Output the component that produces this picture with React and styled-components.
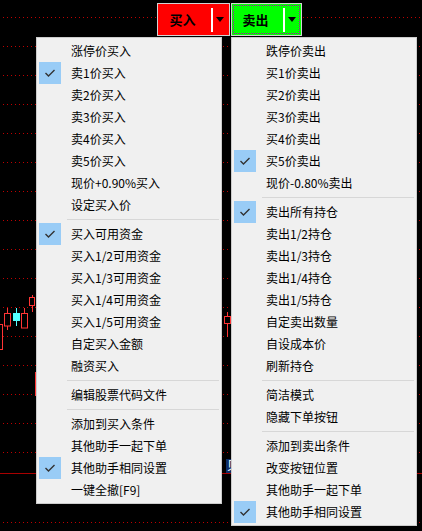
import React from 'react';
import styled, { createGlobalStyle } from 'styled-components';

const GlobalStyle = createGlobalStyle`
  html, body {
    margin: 0;
    padding: 0;
    background: #000;
  }
  * {
    box-sizing: border-box;
  }
`;

const SEP = 'sep';

const buyItems = [
  { text: '涨停价买入' },
  { text: '卖1价买入', checked: true },
  { text: '卖2价买入' },
  { text: '卖3价买入' },
  { text: '卖4价买入' },
  { text: '卖5价买入' },
  { text: '现价+0.90%买入' },
  { text: '设定买入价' },
  SEP,
  { text: '买入可用资金', checked: true },
  { text: '买入1/2可用资金' },
  { text: '买入1/3可用资金' },
  { text: '买入1/4可用资金' },
  { text: '买入1/5可用资金' },
  { text: '自定买入金额' },
  { text: '融资买入' },
  SEP,
  { text: '编辑股票代码文件' },
  SEP,
  { text: '添加到买入条件' },
  { text: '其他助手一起下单' },
  { text: '其他助手相同设置', checked: true },
  { text: '一键全撤[F9]' },
];

const sellItems = [
  { text: '跌停价卖出' },
  { text: '买1价卖出' },
  { text: '买2价卖出' },
  { text: '买3价卖出' },
  { text: '买4价卖出' },
  { text: '买5价卖出', checked: true },
  { text: '现价-0.80%卖出' },
  SEP,
  { text: '卖出所有持仓', checked: true },
  { text: '卖出1/2持仓' },
  { text: '卖出1/3持仓' },
  { text: '卖出1/4持仓' },
  { text: '卖出1/5持仓' },
  { text: '自定卖出数量' },
  { text: '自设成本价' },
  { text: '刷新持仓' },
  SEP,
  { text: '简洁模式' },
  { text: '隐藏下单按钮' },
  SEP,
  { text: '添加到卖出条件' },
  { text: '改变按钮位置' },
  { text: '其他助手一起下单' },
  { text: '其他助手相同设置', checked: true },
];

const gridRows = [17, 46, 75, 104, 133, 162, 191, 220, 249, 278, 307, 336, 365, 394, 423, 452, 522];

const Chart = () => (
  <ChartSvg width="422" height="531" viewBox="0 0 422 531">
    {gridRows.map((y) => (
      <line
        key={y}
        x1="3"
        x2="422"
        y1={y + 0.5}
        y2={y + 0.5}
        stroke="#c00000"
        strokeWidth="1"
        strokeDasharray="1 3"
      />
    ))}
    <line x1="0" x2="422" y1="473.5" y2="473.5" stroke="#a80000" strokeWidth="1" />

    {/* candles */}
    <g stroke="#ff3535" strokeWidth="1" fill="none">
      <rect x="-4.5" y="324.5" width="7" height="25" />
      <line x1="7.5" x2="7.5" y1="308" y2="313.5" />
      <line x1="7.5" x2="7.5" y1="326" y2="330" />
      <rect x="4.5" y="313.5" width="6" height="12.5" />
      <line x1="24.5" x2="24.5" y1="308" y2="313.5" />
      <rect x="21.5" y="313.5" width="6" height="14.5" />
      <line x1="32.5" x2="32.5" y1="295" y2="312" />
      <rect x="29.5" y="297.5" width="5" height="8" fill="#000" />
      <line x1="35.5" x2="35.5" y1="372" y2="396" />
      <line x1="227.5" x2="227.5" y1="312" y2="337" />
      <rect x="224.5" y="316.5" width="6" height="7" fill="#000" />
    </g>
    <line x1="16.5" x2="16.5" y1="308" y2="326" stroke="#54ffff" strokeWidth="1" />
    <rect x="13" y="313" width="7" height="8" fill="#54ffff" />

    <rect x="226" y="459" width="14" height="14" fill="#0c2d66" />
    <text x="227" y="470" fill="#fff" fontSize="12" fontFamily="'Noto Sans CJK SC', sans-serif">
      贝
    </text>
  </ChartSvg>
);

const Check = () => (
  <svg width="22" height="22" viewBox="0 0 22 22">
    <path d="M6.5 11 L9.5 14 L15.5 8" stroke="#333" strokeWidth="1.4" fill="none" />
  </svg>
);

const Menu = ({ items }) => (
  <MenuBox>
    {items.map((item, i) =>
      item === SEP ? (
        <Separator key={i} />
      ) : (
        <MenuItem key={i}>
          <CheckCell checked={item.checked}>{item.checked && <Check />}</CheckCell>
          <ItemText>{item.text}</ItemText>
        </MenuItem>
      )
    )}
  </MenuBox>
);

const OrderButton = ({ label, color, width, focused }) => (
  <ButtonBox color={color} width={width} focused={focused}>
    <ButtonLabel>{label}</ButtonLabel>
    <ButtonDivider />
    <ArrowCell>
      <Arrow />
    </ArrowCell>
  </ButtonBox>
);

const App = () => (
  <Screen>
    <GlobalStyle />
    <Chart />
    <Overlay>
      <ButtonRow>
        <OrderButton label="买入" color="#ff0000" width={73} />
        <OrderButton label="卖出" color="#00ff00" width={71} focused />
      </ButtonRow>
      <MenuRow>
        <Menu items={buyItems} />
        <Menu items={sellItems} />
      </MenuRow>
    </Overlay>
  </Screen>
);

const Screen = styled.div`
  position: relative;
  width: 422px;
  height: 531px;
  overflow: hidden;
  background: #000;
  font-family: 'Noto Sans CJK SC', 'Microsoft YaHei', sans-serif;
`;

const ChartSvg = styled.svg`
  position: absolute;
  top: 0;
  left: 0;
  display: block;
`;

const Overlay = styled.div`
  position: relative;
  display: flex;
  flex-direction: column;
  padding-top: 3px;
`;

const ButtonRow = styled.div`
  display: flex;
  gap: 1px;
  margin-left: 157px;
  height: 33px;
`;

const ButtonBox = styled.div`
  display: flex;
  align-items: center;
  width: ${(p) => p.width}px;
  height: 33px;
  background: ${(p) => p.color};
  border: 1px solid #d2d2d2;
  outline: ${(p) => (p.focused ? '1px dotted #b400b4' : 'none')};
  outline-offset: -3px;
`;

const ButtonLabel = styled.div`
  flex: 1;
  text-align: center;
  padding-right: 4px;
  font-size: 13px;
  font-weight: bold;
  color: #000;
  line-height: 31px;
`;

const ButtonDivider = styled.div`
  width: 2px;
  height: 24px;
  background: #fff;
`;

const ArrowCell = styled.div`
  width: 16px;
  display: flex;
  justify-content: center;
  align-items: center;
  padding-right: 2px;
`;

const Arrow = styled.div`
  width: 0;
  height: 0;
  border-left: 4px solid transparent;
  border-right: 4px solid transparent;
  border-top: 5px solid #000;
`;

const MenuRow = styled.div`
  display: flex;
  align-items: flex-start;
  gap: 9px;
  margin-top: 1px;
  padding-left: 36px;
`;

const MenuBox = styled.div`
  width: 186px;
  background: #f0f0f0;
  border: 1px solid #cccccc;
  padding: 2px;
`;

const MenuItem = styled.div`
  display: flex;
  align-items: center;
  height: 22px;
`;

const CheckCell = styled.div`
  width: 22px;
  height: 22px;
  flex-shrink: 0;
  background: ${(p) => (p.checked ? '#99ccf6' : 'transparent')};
`;

const ItemText = styled.span`
  margin-left: 10px;
  font-size: 12px;
  line-height: 22px;
  color: #000;
  white-space: nowrap;
`;

const Separator = styled.div`
  height: 1px;
  margin: 3px 0 3px 28px;
  background: #d7d7d7;
`;

export default App;
